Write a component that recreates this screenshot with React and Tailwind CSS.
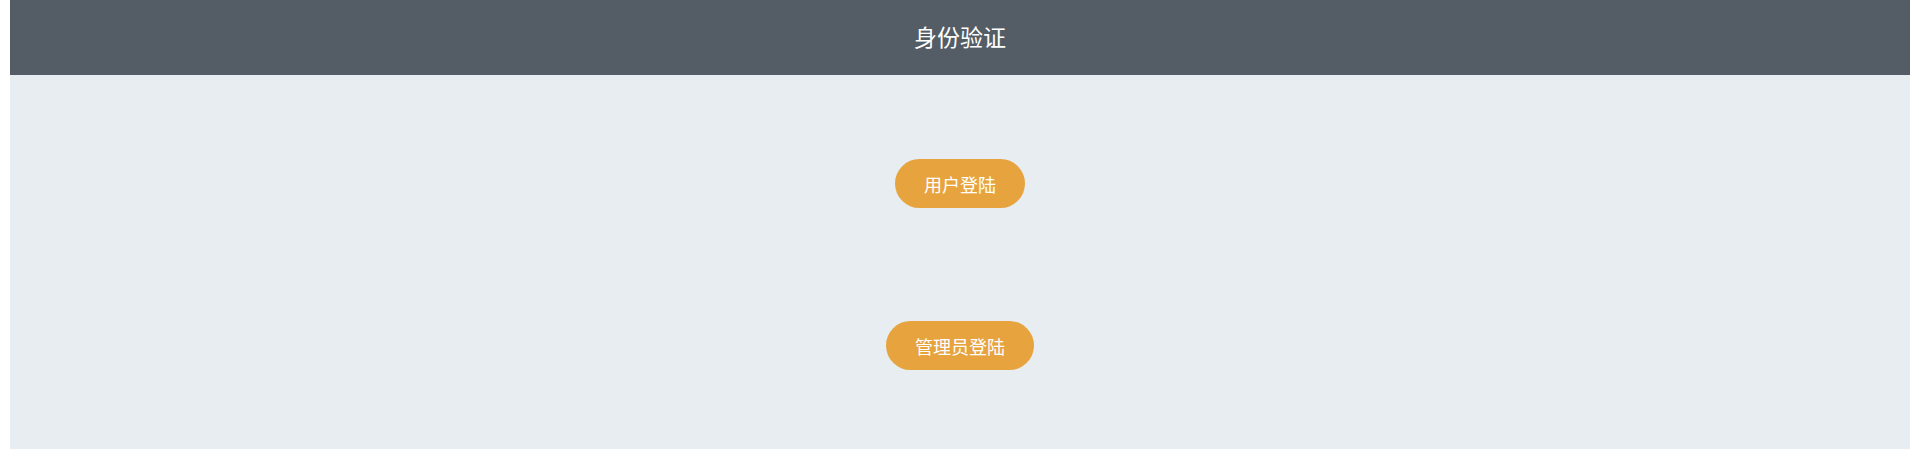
import React from 'react';

function LoginButton({ label }) {
  return (
    <button className="h-[49px] px-[29px] rounded-full bg-[#e7a43e] text-white text-[18px] leading-none">
      {label}
    </button>
  );
}

export default function App() {
  return (
    <div className="w-full bg-white pl-[10px] pr-[9px] pb-[14px] font-['Noto_Sans_CJK_SC',sans-serif]">
      <div className="bg-[#e8edf1]">
        <header className="h-[75px] bg-[#545d66] flex items-center justify-center pb-[2px]">
          <h1 className="text-white text-[23px] leading-none">身份验证</h1>
        </header>
        <main className="flex flex-col items-center pt-[84px] pb-[79px] gap-[113px]">
          <LoginButton label="用户登陆" />
          <LoginButton label="管理员登陆" />
        </main>
      </div>
    </div>
  );
}
